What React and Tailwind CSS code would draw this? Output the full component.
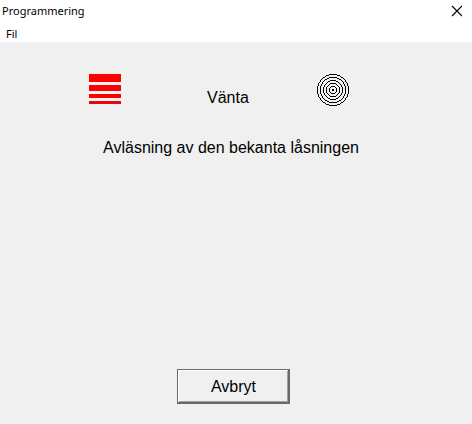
import React from 'react';

const RINGS = [15.5, 12.5, 9.5, 6.5, 3.5];

// One-pixel-wide circle outline on a 32x32 grid, mirrored over all eight octants
const ringPath = (r) => {
    const cells = [];
    for (let x = 0.5; x <= r; x += 1) {
        const y = Math.round(Math.sqrt(r * r - x * x) - 0.5) + 0.5;
        if (x > y) break;
        [[x, y], [y, x]].forEach(([a, b]) => {
            [[a, b], [-a, b], [a, -b], [-a, -b]].forEach(([px, py]) => {
                cells.push(`M${15.5 + px} ${15.5 + py}h1v1h-1z`);
            });
        });
    }
    return cells.join('');
};

const TitleBar = ({ title }) => (
    <header className="flex h-[22px] items-center justify-between bg-white pl-0.5 pr-2.5">
        <h1 className="text-[11px] leading-4">{title}</h1>
        <button type="button" aria-label="Stäng" className="flex h-4 w-3 items-center justify-center">
            <svg className="h-3 w-3" viewBox="0 0 12 12" stroke="#000" strokeWidth="1.2" fill="none">
                <path d="M2 1L12 11M12 1L2 11" />
            </svg>
        </button>
    </header>
);

const MenuBar = () => (
    <nav className="flex h-5 items-end bg-white px-1.5">
        <button type="button" className="text-[11px] leading-4">Fil</button>
    </nav>
);

const BarsIcon = () => (
    <svg className="h-8 w-8" viewBox="0 0 32 32" shapeRendering="crispEdges" aria-hidden="true">
        <rect width="32" height="8" fill="#ff0000" />
        <rect y="11" width="32" height="6" fill="#f50505" />
        <rect y="20" width="32" height="4" fill="#f20505" />
        <rect y="27" width="32" height="3" fill="#e60808" />
    </svg>
);

const RingsIcon = () => (
    <svg className="h-8 w-8" viewBox="0 0 32 32" shapeRendering="crispEdges" aria-hidden="true">
        {RINGS.map(r => (
            <path key={r} d={ringPath(r)} fill="#000" />
        ))}
        <rect x="15" y="15" width="2" height="2" />
    </svg>
);

export default function App() {
    return (
        <div className="flex min-h-screen flex-col bg-[#f0f0f0] font-['Noto_Sans','Open_Sans',sans-serif] text-black">
            <TitleBar title="Programmering" />
            <MenuBar />
            <main className="flex flex-1 flex-col items-center pt-8 pb-5 font-['Liberation_Sans',Arial,sans-serif] text-[16px] leading-5">
                <div className="mr-[34px] grid grid-cols-[32px_196px_32px]">
                    <BarsIcon />
                    <p className="pt-3.5 pl-[86px]">Vänta</p>
                    <RingsIcon />
                </div>
                <p className="mt-[30px] mr-2.5">Avläsning av den bekanta låsningen</p>
                <button
                    type="button"
                    className="mt-auto mr-1.5 h-[35px] w-[113px] border border-r-2 border-b-2 border-[#696969] bg-[#f0f0f0] pt-0.5 pl-0.5 shadow-[inset_1px_1px_0_#ffffff,inset_-1px_-1px_0_#a0a0a0]"
                >
                    Avbryt
                </button>
            </main>
        </div>
    );
}
